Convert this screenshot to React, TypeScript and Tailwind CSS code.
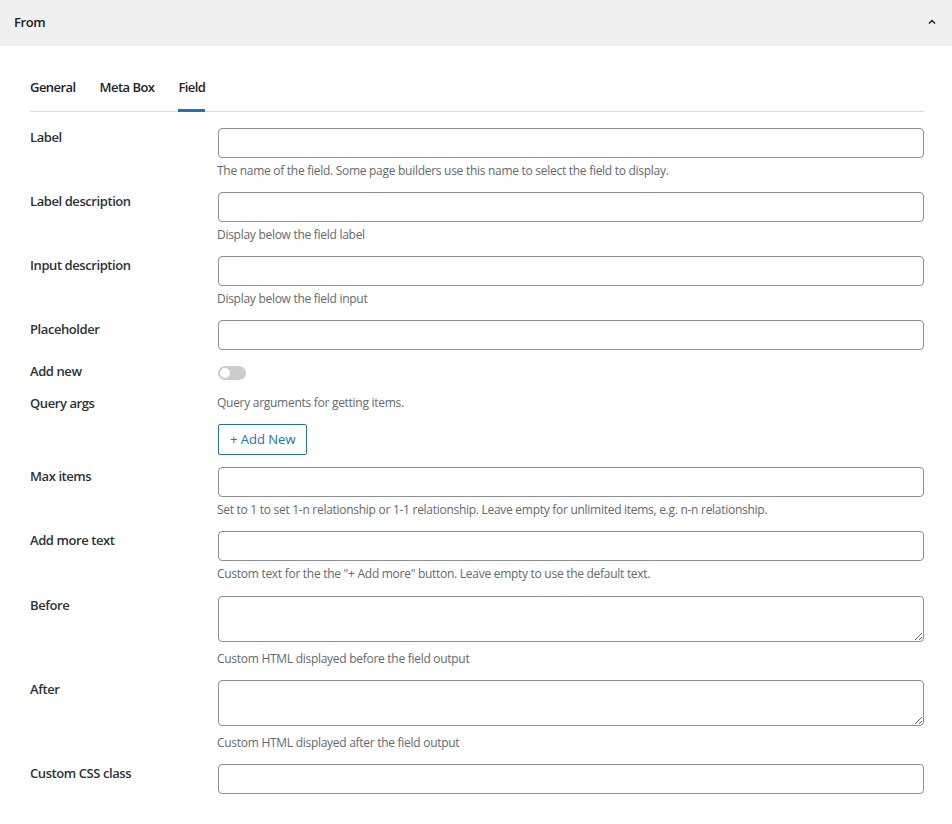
import React from 'react';

const font = { fontFamily: '"Open Sans", "Noto Sans", sans-serif' };

const Input = () => (
  <input type="text" className="block w-full h-[30px] rounded-[4px] border border-[#8c8f94] bg-white px-2 text-[14px] outline-none" />
);

const TextArea = () => (
  <textarea className="block w-full h-[46px] rounded-[4px] border border-[#8c8f94] bg-white px-2 text-[14px] outline-none resize-y" />
);

const Desc = ({ children, className = '' }: { children: React.ReactNode; className?: string }) => (
  <p className={`-ml-px text-[12px] leading-[18px] tracking-[-0.28px] text-[#646970] ${className}`}>{children}</p>
);

const Row = ({ label, children, className = 'mb-3' }: { label: string; children: React.ReactNode; className?: string }) => (
  <div className={`flex ${className}`}>
    <div className="w-[188px] shrink-0 text-[13px] leading-[18px] font-semibold tracking-[-0.42px] text-[#2c3338]">{label}</div>
    <div className="flex-1 min-w-0">{children}</div>
  </div>
);

const tab = 'pb-[13px] border-b-[3px] -mb-px text-[13px] leading-[18px] font-semibold tracking-[-0.55px] text-[#1d2327]';

export default function App() {
  return (
    <div className="w-[952px] h-[824px] bg-white" style={font}>
      {/* Box header */}
      <div className="h-[46px] bg-[#f0f0f0] flex items-center justify-between pl-[14px] pr-[16px]">
        <span className="text-[13px] font-semibold tracking-[-0.4px] text-[#1e1e1e]">From</span>
        <svg width="8" height="6" viewBox="0 0 8 6" className="mb-[3px]">
          <path d="M1 4.5 L4 1.5 L7 4.5" fill="none" stroke="#1e1e1e" strokeWidth="1.5" />
        </svg>
      </div>

      <div className="pl-[30px] pr-[28px]">
        {/* Tabs */}
        <div className="flex gap-6 border-b border-[#dcdcde] mt-8">
          <div className={`${tab} border-transparent`}>General</div>
          <div className={`${tab} border-transparent`}>Meta Box</div>
          <div className={`${tab} border-[#2271b1]`}>Field</div>
        </div>

        <div className="pt-[16px]">
          <Row label="Label">
            <Input />
            <Desc className="mt-1">The name of the field. Some page builders use this name to select the field to display.</Desc>
          </Row>
          <Row label="Label description">
            <Input />
            <Desc className="mt-1">Display below the field label</Desc>
          </Row>
          <Row label="Input description">
            <Input />
            <Desc className="mt-1">Display below the field input</Desc>
          </Row>
          <Row label="Placeholder">
            <Input />
          </Row>
          <Row label="Add new">
            <div className="h-[20px] pt-1">
              <div className="w-[28px] h-[14px] rounded-full bg-[#cccccc] relative">
                <div className="absolute left-[2px] top-[2px] w-[10px] h-[10px] rounded-full bg-white" />
              </div>
            </div>
          </Row>
          <Row label="Query args">
            <Desc>Query arguments for getting items.</Desc>
            <button className="mt-3 h-[31px] px-[11px] rounded-[2px] border border-[#2271b1] bg-white text-[13px] text-[#2271b1]">+ Add New</button>
          </Row>
          <Row label="Max items">
            <Input />
            <Desc className="mt-1">Set to 1 to set 1-n relationship or 1-1 relationship. Leave empty for unlimited items, e.g. n-n relationship.</Desc>
          </Row>
          <Row label="Add more text" className="mb-[13px]">
            <Input />
            <Desc className="mt-1">Custom text for the the "+ Add more" button. Leave empty to use the default text.</Desc>
          </Row>
          <Row label="Before">
            <TextArea />
            <Desc className="mt-2">Custom HTML displayed before the field output</Desc>
          </Row>
          <Row label="After">
            <TextArea />
            <Desc className="mt-2">Custom HTML displayed after the field output</Desc>
          </Row>
          <Row label="Custom CSS class">
            <Input />
          </Row>
        </div>
      </div>
    </div>
  );
}
